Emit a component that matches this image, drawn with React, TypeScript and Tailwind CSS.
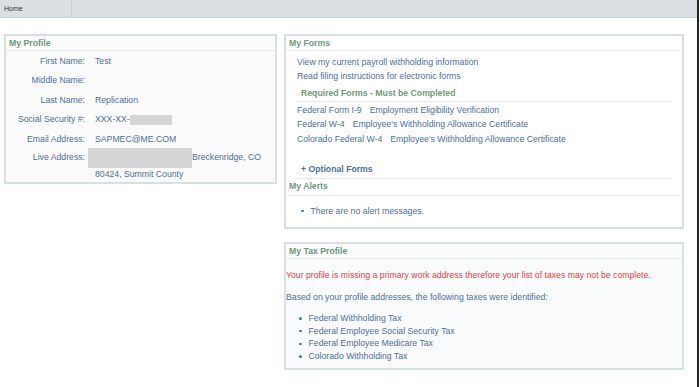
import React from "react";

const profileRows = [
  { label: "First Name:", value: "Test" },
  { label: "Middle Name:", value: "" },
  { label: "Last Name:", value: "Replication" },
  { label: "Social Security #:", value: "ssn" },
  { label: "Email Address:", value: "SAPMEC@ME.COM" },
];

const requiredForms = [
  ["Federal Form I-9", "Employment Eligibility Verification"],
  ["Federal W-4", "Employee's Withholding Allowance Certificate"],
  ["Colorado Federal W-4", "Employee's Withholding Allowance Certificate"],
];

const taxes = [
  "Federal Withholding Tax",
  "Federal Employee Social Security Tax",
  "Federal Employee Medicare Tax",
  "Colorado Withholding Tax",
];

function PanelHeader({ children }: { children: React.ReactNode }) {
  return (
    <div className="h-[15px] flex items-center px-[3px] border-b border-[#e6ecec] font-bold text-[#6f9a7c]">
      {children}
    </div>
  );
}

function Dot() {
  return <span className="w-[2.5px] h-[2.5px] rounded-full bg-[#4a70a8]" />;
}

export default function App() {
  return (
    <div
      className="w-[700px] h-[387px] bg-white flex text-[8.7px] leading-none text-[#4a70a8] overflow-hidden"
      style={{ fontFamily: '"Liberation Sans", Arial, sans-serif' }}
    >
      <div className="w-[697px] flex flex-col">
        {/* top tab bar */}
        <div className="h-[18px] bg-[#d9dfe2] border-b border-[#c4d3d8] flex">
          <div className="w-[72px] flex items-center pl-[4px] text-[#333] text-[7px] border-r border-[#c8d2d6]">
            Home
          </div>
        </div>

        <div className="flex gap-[7px] pl-[4px] pt-[16px] items-start">
          {/* My Profile */}
          <div className="w-[273px] h-[150px] border-2 border-[#d6e1e2] bg-[#fbfbfb]">
            <PanelHeader>My Profile</PanelHeader>
            <div className="pt-[6px] flex flex-col gap-[11.5px]">
              {profileRows.map((r) => (
                <div key={r.label} className="flex h-[8px] items-center">
                  <div className="w-[79px] text-right">{r.label}</div>
                  <div className="pl-[10px] flex items-center">
                    {r.value === "ssn" ? (
                      <>
                        <span>XXX-XX-</span>
                        <span className="w-[42px] h-[10px] bg-[#d6d6d6]" />
                      </>
                    ) : (
                      r.value
                    )}
                  </div>
                </div>
              ))}
              <div className="-mt-[7px]">
                <div className="flex items-center h-[20px]">
                  <div className="w-[79px] text-right">Live Address:</div>
                  <span className="ml-[3px] w-[104px] h-[20px] bg-[#d6d6d6]" />
                  <span>Breckenridge, CO</span>
                </div>
                <div className="pl-[89px] pt-[2px]">80424, Summit County</div>
              </div>
            </div>
          </div>

          {/* right column */}
          <div className="flex flex-col gap-[13px]">
            <div className="w-[400px] h-[195px] border-2 border-[#d6e1e2] bg-white">
              <PanelHeader>My Forms</PanelHeader>
              <div className="pl-[11px] pr-[11px] pt-[4px]">
                <div className="h-[14px] flex items-center">
                  View my current payroll withholding information
                </div>
                <div className="h-[14px] flex items-center">
                  Read filing instructions for electronic forms
                </div>
                <div className="h-[19px] flex items-end pb-[3px] pl-[4px] font-bold text-[#6f9a7c] border-b border-[#e8eded]">
                  Required Forms - Must be Completed
                </div>
                <div className="pt-[1px]">
                  {requiredForms.map(([a, b]) => (
                    <div key={a} className="h-[14.5px] flex items-center gap-[8px]">
                      <span>{a}</span>
                      <span>{b}</span>
                    </div>
                  ))}
                </div>
                <div className="mt-[14px] h-[18px] flex items-center pl-[4px] font-bold border-b border-[#e8eded]">
                  + Optional Forms
                </div>
              </div>
              <div className="h-[17px] flex items-center px-[3px] font-bold text-[#6f9a7c] border-b border-[#e8eded]">
                My Alerts
              </div>
              <div className="pt-[11px] pl-[15px] flex items-center gap-[7px]">
                <Dot />
                <span>There are no alert messages.</span>
              </div>
            </div>

            <div className="w-[400px] h-[128px] border-2 border-[#d6e1e2] bg-[#fafbfc]">
              <PanelHeader>My Tax Profile</PanelHeader>
              <div className="pt-[12px] text-[#ef3b3b]">
                Your profile is missing a primary work address therefore your list of taxes may not be complete.
              </div>
              <div className="pt-[13px]">
                Based on your profile addresses, the following taxes were identified:
              </div>
              <div className="pt-[13px] pl-[13px] flex flex-col gap-[4.7px]">
                {taxes.map((t) => (
                  <div key={t} className="flex items-center gap-[7px] h-[8px]">
                    <Dot />
                    <span>{t}</span>
                  </div>
                ))}
              </div>
            </div>
          </div>
        </div>
      </div>
      <div className="w-[2px] bg-[#222]" />
    </div>
  );
}
